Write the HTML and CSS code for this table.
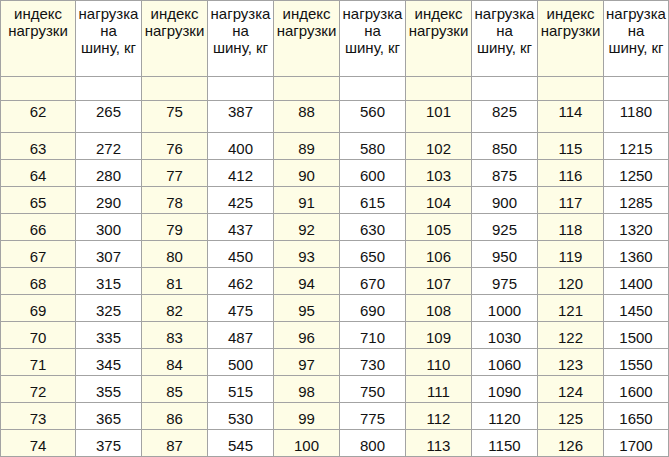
FILE: index.html
```html
<!DOCTYPE html>
<html lang="ru">
<head>
<meta charset="utf-8">
<title>Индекс нагрузки шин</title>
<link rel="stylesheet" href="styles.css">
</head>
<body>
<div class="load-table" role="table">
  <div class="cell idx head">индекс<br>нагрузки</div>
  <div class="cell kg head">нагрузка<br>на<br>шину, кг</div>
  <div class="cell idx head">индекс<br>нагрузки</div>
  <div class="cell kg head">нагрузка<br>на<br>шину, кг</div>
  <div class="cell idx head">индекс<br>нагрузки</div>
  <div class="cell kg head">нагрузка<br>на<br>шину, кг</div>
  <div class="cell idx head">индекс<br>нагрузки</div>
  <div class="cell kg head">нагрузка<br>на<br>шину, кг</div>
  <div class="cell idx head">индекс<br>нагрузки</div>
  <div class="cell kg head">нагрузка<br>на<br>шину, кг</div>

  <div class="cell idx"></div><div class="cell kg"></div><div class="cell idx"></div><div class="cell kg"></div><div class="cell idx"></div><div class="cell kg"></div><div class="cell idx"></div><div class="cell kg"></div><div class="cell idx"></div><div class="cell kg"></div>

  <div class="cell idx first">62</div><div class="cell kg first">265</div><div class="cell idx first">75</div><div class="cell kg first">387</div><div class="cell idx first">88</div><div class="cell kg first">560</div><div class="cell idx first">101</div><div class="cell kg first">825</div><div class="cell idx first">114</div><div class="cell kg first">1180</div>
  <div class="cell idx">63</div><div class="cell kg">272</div><div class="cell idx">76</div><div class="cell kg">400</div><div class="cell idx">89</div><div class="cell kg">580</div><div class="cell idx">102</div><div class="cell kg">850</div><div class="cell idx">115</div><div class="cell kg">1215</div>
  <div class="cell idx">64</div><div class="cell kg">280</div><div class="cell idx">77</div><div class="cell kg">412</div><div class="cell idx">90</div><div class="cell kg">600</div><div class="cell idx">103</div><div class="cell kg">875</div><div class="cell idx">116</div><div class="cell kg">1250</div>
  <div class="cell idx">65</div><div class="cell kg">290</div><div class="cell idx">78</div><div class="cell kg">425</div><div class="cell idx">91</div><div class="cell kg">615</div><div class="cell idx">104</div><div class="cell kg">900</div><div class="cell idx">117</div><div class="cell kg">1285</div>
  <div class="cell idx">66</div><div class="cell kg">300</div><div class="cell idx">79</div><div class="cell kg">437</div><div class="cell idx">92</div><div class="cell kg">630</div><div class="cell idx">105</div><div class="cell kg">925</div><div class="cell idx">118</div><div class="cell kg">1320</div>
  <div class="cell idx">67</div><div class="cell kg">307</div><div class="cell idx">80</div><div class="cell kg">450</div><div class="cell idx">93</div><div class="cell kg">650</div><div class="cell idx">106</div><div class="cell kg">950</div><div class="cell idx">119</div><div class="cell kg">1360</div>
  <div class="cell idx">68</div><div class="cell kg">315</div><div class="cell idx">81</div><div class="cell kg">462</div><div class="cell idx">94</div><div class="cell kg">670</div><div class="cell idx">107</div><div class="cell kg">975</div><div class="cell idx">120</div><div class="cell kg">1400</div>
  <div class="cell idx">69</div><div class="cell kg">325</div><div class="cell idx">82</div><div class="cell kg">475</div><div class="cell idx">95</div><div class="cell kg">690</div><div class="cell idx">108</div><div class="cell kg">1000</div><div class="cell idx">121</div><div class="cell kg">1450</div>
  <div class="cell idx">70</div><div class="cell kg">335</div><div class="cell idx">83</div><div class="cell kg">487</div><div class="cell idx">96</div><div class="cell kg">710</div><div class="cell idx">109</div><div class="cell kg">1030</div><div class="cell idx">122</div><div class="cell kg">1500</div>
  <div class="cell idx">71</div><div class="cell kg">345</div><div class="cell idx">84</div><div class="cell kg">500</div><div class="cell idx">97</div><div class="cell kg">730</div><div class="cell idx">110</div><div class="cell kg">1060</div><div class="cell idx">123</div><div class="cell kg">1550</div>
  <div class="cell idx">72</div><div class="cell kg">355</div><div class="cell idx">85</div><div class="cell kg">515</div><div class="cell idx">98</div><div class="cell kg">750</div><div class="cell idx">111</div><div class="cell kg">1090</div><div class="cell idx">124</div><div class="cell kg">1600</div>
  <div class="cell idx">73</div><div class="cell kg">365</div><div class="cell idx">86</div><div class="cell kg">530</div><div class="cell idx">99</div><div class="cell kg">775</div><div class="cell idx">112</div><div class="cell kg">1120</div><div class="cell idx">125</div><div class="cell kg">1650</div>
  <div class="cell idx">74</div><div class="cell kg">375</div><div class="cell idx">87</div><div class="cell kg">545</div><div class="cell idx">100</div><div class="cell kg">800</div><div class="cell idx">113</div><div class="cell kg">1150</div><div class="cell idx">126</div><div class="cell kg">1700</div>
</div>
</body>
</html>
```
FILE: styles.css
```css
html, body {
  margin: 0;
  padding: 0;
  background: #ffffff;
}

.load-table {
  display: grid;
  grid-template-columns: 74px repeat(8, 65px) 64px;
  grid-template-rows: 75px 23px 31px repeat(12, 26px);
  gap: 1px;
  padding: 1px;
  width: max-content;
  background: #a3a3a3;
  font-family: "Liberation Sans", Arial, sans-serif;
  font-size: 15px;
  line-height: 17px;
  color: #111111;
}

.cell {
  text-align: center;
  padding-top: 7px;
  box-sizing: border-box;
  overflow: hidden;
  white-space: nowrap;
}

.cell.first {
  padding-top: 2px;
}

.cell.head {
  padding-top: 4px;
}

.idx {
  background: #fefde6;
}

.kg {
  background: #ffffff;
}
```
